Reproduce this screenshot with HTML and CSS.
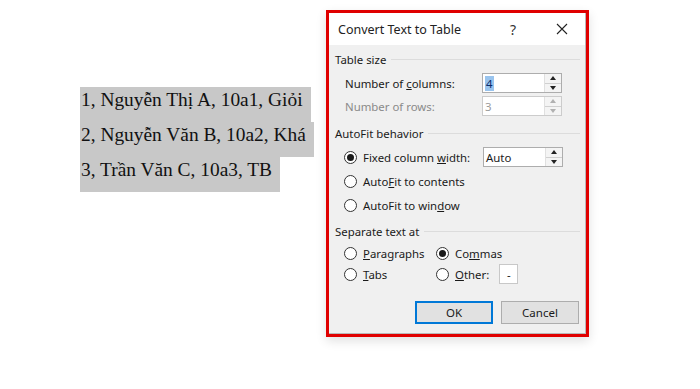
FILE: index.html
```html
<!DOCTYPE html>
<html>
<head>
<meta charset="utf-8">
<link rel="stylesheet" href="styles.css">
</head>
<body>
<div class="page">
  <div class="doc">
    <div class="line">1, Nguyễn Thị A, 10a1, Giỏi</div>
    <div class="line">2, Nguyễn Văn B, 10a2, Khá</div>
    <div class="line">3, Trần Văn C, 10a3, TB</div>
  </div>
  <div class="frame">
    <div class="dialog">
      <div class="titlebar">
        <span class="title">Convert Text to Table</span>
        <span class="help">?</span>
        <svg class="close" width="12" height="12" viewBox="0 0 12 12"><path d="M1 1L11 11M11 1L1 11" stroke="#222" stroke-width="1.1" fill="none"/></svg>
      </div>
      <div class="body">
        <div class="group"><span>Table size</span><i class="rule"></i></div>
        <div class="row r-cols">
          <span class="lbl strong">Number of <u>c</u>olumns:</span>
          <div class="spin">
            <div class="field"><span class="sel">4</span></div>
            <div class="arrows"><span class="up"></span><span class="down"></span></div>
          </div>
        </div>
        <div class="row r-rows">
          <span class="lbl dim">Number of rows:</span>
          <div class="spin disabled">
            <div class="field">3</div>
            <div class="arrows"><span class="up"></span><span class="down"></span></div>
          </div>
        </div>
        <div class="group g2"><span>AutoFit behavior</span><i class="rule"></i></div>
        <div class="row r-fixed">
          <span class="radio on"></span>
          <span class="lbl wide">Fixed column <u>w</u>idth:</span>
          <div class="spin">
            <div class="field">Auto</div>
            <div class="arrows"><span class="up"></span><span class="down"></span></div>
          </div>
        </div>
        <div class="row r-opt"><span class="radio"></span><span class="lbl">Auto<u>F</u>it to contents</span></div>
        <div class="row r-opt"><span class="radio"></span><span class="lbl">AutoFit to win<u>d</u>ow</span></div>
        <div class="group g3"><span>Separate text at</span><i class="rule"></i></div>
        <div class="row r-sep">
          <div class="cell"><span class="radio"></span><span class="lbl"><u>P</u>aragraphs</span></div>
          <div class="cell"><span class="radio on"></span><span class="lbl">Co<u>m</u>mas</span></div>
        </div>
        <div class="row r-sep2">
          <div class="cell"><span class="radio"></span><span class="lbl"><u>T</u>abs</span></div>
          <div class="cell"><span class="radio"></span><span class="lbl"><u>O</u>ther:</span><span class="other">-</span></div>
        </div>
        <div class="buttons">
          <button class="btn ok">OK</button>
          <button class="btn">Cancel</button>
        </div>
      </div>
    </div>
  </div>
</div>
</body>
</html>
```

FILE: styles.css
```css
* { box-sizing: border-box; }
html, body { margin: 0; padding: 0; background: #fff; }
body { width: 700px; height: 389px; overflow: hidden; }
.page { display: flex; align-items: flex-start; }

.doc {
  display: flex; flex-direction: column; align-items: flex-start;
  margin-left: 80px; margin-top: 87px; width: 246px;
  font-family: "Liberation Serif", "Times New Roman", serif;
  font-size: 19.4px; color: #111;
}
.line {
  background: #c8c8c8;
  line-height: 24px;
  height: 35px;
  padding: 1px 8px 10px 1px;
  white-space: nowrap;
}

.frame {
  margin-top: 10px;
  width: 263px; height: 327px;
  border: 3px solid #e00000;
  box-shadow: 0 4px 10px rgba(0,0,0,0.12);
}
.dialog {
  width: 100%; height: 100%;
  background: #f0f0f0;
  border-right: 1px solid #b9b9b9;
  border-bottom: 1px solid #b9b9b9;
  font-family: "Noto Sans", "Open Sans", sans-serif;
  font-size: 11.4px; color: #1a1a1a;
  display: flex; flex-direction: column;
}
.titlebar {
  height: 32px; background: #fff;
  display: flex; align-items: center;
  padding-left: 9px;
}
.title { font-size: 12.5px; color: #222; width: 172px; }
.help { font-size: 14px; color: #333; width: 46px; }
.close { display: block; }

.body { padding: 4px 0 0 6px; display: flex; flex-direction: column; }
.group { height: 20px; display: flex; align-items: center; gap: 5px; color: #1a1a1a; }
.group .rule { flex: 1; height: 1px; background: #dcdcdc; margin-right: 5px; }
.g2 { margin-top: 7px; }
.g3 { margin-top: 6px; }

.row { display: flex; align-items: center; height: 20px; padding-left: 10px; }
.r-cols { margin-top: 4px; }
.r-rows { margin-top: 3px; }
.r-fixed { margin-top: 4px; padding-left: 9px; }
.r-opt { margin-top: 4px; padding-left: 9px; }
.r-sep { margin-top: 2px; padding-left: 9px; }
.r-sep2 { margin-top: 1px; padding-left: 9px; }

.lbl { white-space: nowrap; }
.strong { color: #1a1a1a; width: 137px; }
.dim { color: #8a8a8a; width: 137px; }
.wide { width: 120px; }

.spin { display: flex; width: 80px; height: 20px; border: 1px solid #adadad; background: #fff; }
.spin .field { flex: 1; display: flex; align-items: center; padding-left: 2px; }
.sel { background: #99c4ee; color: #0a2a6a; padding: 0 1px; line-height: 15px; }
.arrows { width: 17px; display: flex; flex-direction: column; border-left: 1px solid #e0e0e0; background: #f4f4f4; }
.arrows span { flex: 1; display: flex; align-items: center; justify-content: center; }
.arrows .up { border-bottom: 1px solid #d0d0d0; }
.arrows .up::after { content: ""; border-left: 3.5px solid transparent; border-right: 3.5px solid transparent; border-bottom: 4px solid #222; }
.arrows .down::after { content: ""; border-left: 3.5px solid transparent; border-right: 3.5px solid transparent; border-top: 4px solid #222; }
.disabled { border-color: #cccccc; }
.disabled .field { color: #9a9a9a; }
.disabled .arrows .up::after { border-bottom-color: #b0b0b0; }
.disabled .arrows .down::after { border-top-color: #b0b0b0; }

.radio {
  width: 13px; height: 13px; border-radius: 50%;
  border: 1px solid #333; background: #fff;
  margin-right: 6px; flex: none;
  display: flex; align-items: center; justify-content: center;
}
.radio.on::after { content: ""; width: 7px; height: 7px; border-radius: 50%; background: #1a1a1a; }

.cell { display: flex; align-items: center; }
.cell:first-child { width: 92px; }
.other {
  margin-left: 10px; width: 19px; height: 20px;
  border: 1px solid #c8c8c8; background: #fff;
  display: flex; align-items: center; justify-content: center;
}

.buttons { display: flex; gap: 8px; margin-top: 17px; padding-left: 80px; }
.btn {
  width: 78px; height: 23px;
  font-family: "Noto Sans", "Open Sans", sans-serif; font-size: 11.5px; color: #1a1a1a;
  background: #e1e1e1; border: 1px solid #adadad; padding: 0;
}
.btn.ok { border: 2px solid #0078d7; }
```
